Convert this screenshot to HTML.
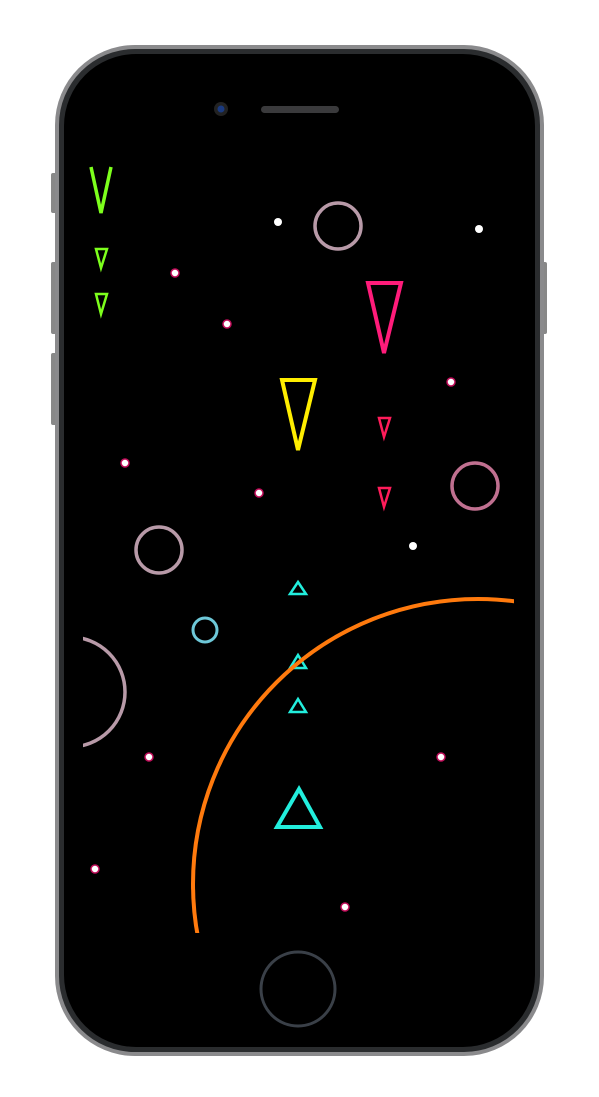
<!DOCTYPE html>
<html><head><style>
html,body{margin:0;padding:0;background:#fff;width:599px;height:1097px;overflow:hidden}
svg{display:block}
</style></head><body>
<svg width="599" height="1097" viewBox="0 0 599 1097" xmlns="http://www.w3.org/2000/svg">
<defs>
<filter id="g" x="-50%" y="-50%" width="200%" height="200%"><feGaussianBlur stdDeviation="2" result="b"/><feMerge><feMergeNode in="b"/><feMergeNode in="SourceGraphic"/></feMerge></filter>
<clipPath id="scr"><rect x="83" y="137" width="431" height="796"/></clipPath>
</defs>
<rect x="51" y="173" width="6" height="40" rx="2" fill="#888"/>
<rect x="51" y="262" width="6" height="72" rx="2" fill="#888"/>
<rect x="51" y="353" width="6" height="72" rx="2" fill="#888"/>
<rect x="541" y="262" width="6" height="72" rx="2" fill="#888"/>
<rect x="55" y="45" width="489" height="1011" rx="80" fill="#8a8a8c"/>
<rect x="59" y="49" width="481" height="1003" rx="76" fill="#2a2c2e"/>
<rect x="64" y="54" width="471" height="993" rx="72" fill="#000"/>
<circle cx="221" cy="109" r="7" fill="#222"/><circle cx="221" cy="109" r="3.5" fill="#1a3a80"/>
<rect x="261" y="106" width="78" height="7" rx="3.5" fill="#3a3a3c"/>
<circle cx="298" cy="989" r="37" fill="none" stroke="#3a4048" stroke-width="3"/>
<g clip-path="url(#scr)" filter="url(#g)">
<rect x="83" y="137" width="431" height="796" fill="#000"/>
<polyline points="91,167 101,213 111,167" fill="none" stroke="#7dff1e" stroke-width="3.5"/>
<polygon points="96,249 107,249 101,268" fill="none" stroke="#7dff1e" stroke-width="2.5"/>
<polygon points="96,294 107,294 101,314" fill="none" stroke="#7dff1e" stroke-width="2.5"/>
<polygon points="368,283 401,283 384,353" fill="none" stroke="#ff1a7a" stroke-width="4"/>
<polygon points="379,418 390,418 384,437" fill="none" stroke="#ff1a5a" stroke-width="2.5"/>
<polygon points="379,488 390,488 384,507" fill="none" stroke="#ff1a5a" stroke-width="2.5"/>
<polygon points="282,380 315,380 298,450" fill="none" stroke="#ffee00" stroke-width="4"/>
<polygon points="298,582 306,594 290,594" fill="none" stroke="#22eedd" stroke-width="2.5"/>
<polygon points="298,655 306,668 290,668" fill="none" stroke="#22eedd" stroke-width="2.5"/>
<polygon points="298,699 306,712 290,712" fill="none" stroke="#22eedd" stroke-width="2.5"/>
<polygon points="299,789 320,827 277,827" fill="none" stroke="#22eedd" stroke-width="4"/>
<circle cx="338" cy="226" r="23" fill="none" stroke="#b89aa8" stroke-width="3.5"/>
<circle cx="475" cy="486" r="23" fill="none" stroke="#c07090" stroke-width="3.5"/>
<circle cx="159" cy="550" r="23" fill="none" stroke="#b89aa8" stroke-width="3.5"/>
<circle cx="205" cy="630" r="12" fill="none" stroke="#6ec8d8" stroke-width="3"/>
<circle cx="70" cy="692" r="55" fill="none" stroke="#b89aa8" stroke-width="3.5"/>
<circle cx="478" cy="884" r="285" fill="none" stroke="#ff7a10" stroke-width="4"/>
<g fill="#fff">
<circle cx="278" cy="222" r="4"/><circle cx="479" cy="229" r="4"/><circle cx="413" cy="546" r="4"/>
</g>
<g fill="#fff" stroke="#c0105a" stroke-width="1.5">
<circle cx="175" cy="273" r="4"/><circle cx="227" cy="324" r="4"/><circle cx="451" cy="382" r="4"/>
<circle cx="125" cy="463" r="4"/><circle cx="259" cy="493" r="4"/><circle cx="149" cy="757" r="4"/>
<circle cx="441" cy="757" r="4"/><circle cx="95" cy="869" r="4"/><circle cx="345" cy="907" r="4"/>
</g>
</g>
</svg>
</body></html>
